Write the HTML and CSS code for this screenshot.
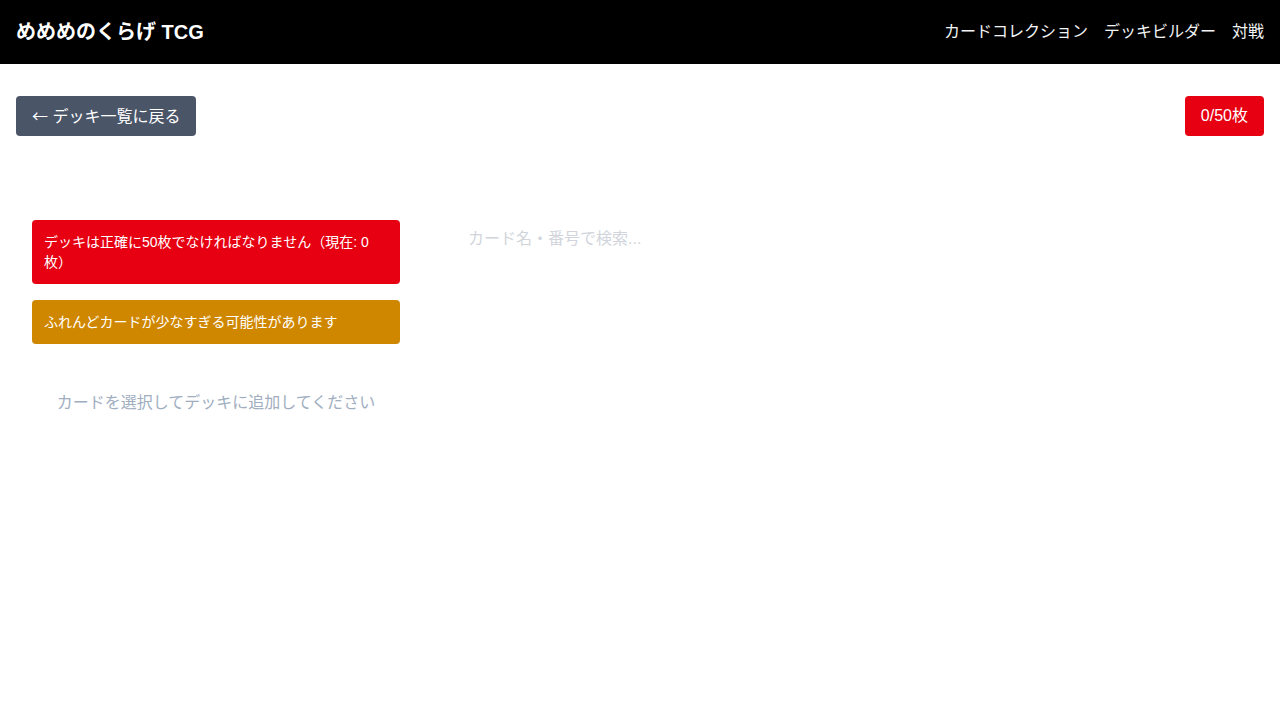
FILE: index.html
```html
<!DOCTYPE html>
<html lang="ja">
<head>
<meta charset="utf-8">
<title>デッキビルダー</title>
<link rel="stylesheet" href="styles.css">
</head>
<body>
<header class="site-header">
  <div class="brand">めめめのくらげ TCG</div>
  <nav class="nav">
    <a class="nav-link" href="#">カードコレクション</a>
    <a class="nav-link" href="#">デッキビルダー</a>
    <a class="nav-link" href="#">対戦</a>
  </nav>
</header>
<main class="main">
  <div class="toolbar">
    <button class="back-btn"><span class="arrow">←</span> デッキ一覧に戻る</button>
    <span class="count-badge">0/50枚</span>
  </div>
  <div class="builder">
    <section class="deck-col">
      <div class="alert alert-error">デッキは正確に50枚でなければなりません（現在: 0枚）</div>
      <div class="alert alert-warn">ふれんどカードが少なすぎる可能性があります</div>
      <p class="empty">カードを選択してデッキに追加してください</p>
    </section>
    <section class="cards-col">
      <input class="search" type="text" placeholder="カード名・番号で検索...">
    </section>
  </div>
</main>
</body>
</html>
```
FILE: styles.css
```css
* { box-sizing: border-box; }
body {
  margin: 0;
  font-family: "Liberation Sans", "Noto Sans CJK JP", sans-serif;
  line-height: 1.5;
  background: #ffffff;
  color: #111;
}
.site-header {
  height: 64px;
  background: #000;
  display: flex;
  align-items: center;
  justify-content: space-between;
  padding: 0 16px;
}
.brand {
  color: #fff;
  font-size: 20px;
  font-weight: bold;
  line-height: 28px;
}
.nav { display: flex; gap: 16px; }
.nav-link {
  color: #f3f4f6;
  text-decoration: none;
  font-size: 16px;
}
.main { padding: 32px 16px; }
.toolbar {
  display: flex;
  justify-content: space-between;
  align-items: center;
}
.back-btn {
  height: 40px;
  padding: 0 16px;
  background: #4a5568;
  color: #fff;
  border: none;
  border-radius: 4px;
  font-family: inherit;
  font-size: 16px;
  line-height: 24px;
}
.arrow { font-family: "Noto Sans CJK JP", sans-serif; }
.count-badge {
  height: 40px;
  padding: 0 16px;
  background: #e60012;
  color: #fff;
  border-radius: 4px;
  font-size: 16px;
  display: flex;
  align-items: center;
}
.builder {
  margin-top: 84px;
  display: grid;
  grid-template-columns: 400px 1fr;
  gap: 32px;
}
.deck-col {
  padding: 0 16px;
  display: flex;
  flex-direction: column;
  gap: 16px;
}
.alert {
  color: #fff;
  font-size: 14px;
  line-height: 20px;
  padding: 12px;
  border-radius: 4px;
}
.alert-error { background: #e60012; }
.alert-warn { background: #d08700; }
.empty {
  margin: 31px 0 0;
  text-align: center;
  color: #a0aec0;
  font-size: 16px;
}
.cards-col { padding: 0; }
.search {
  width: 100%;
  height: 38px;
  border: none;
  outline: none;
  padding: 0 20px;
  font-family: inherit;
  font-size: 16px;
  background: transparent;
}
.search::placeholder { color: #d1d5db; }
```
